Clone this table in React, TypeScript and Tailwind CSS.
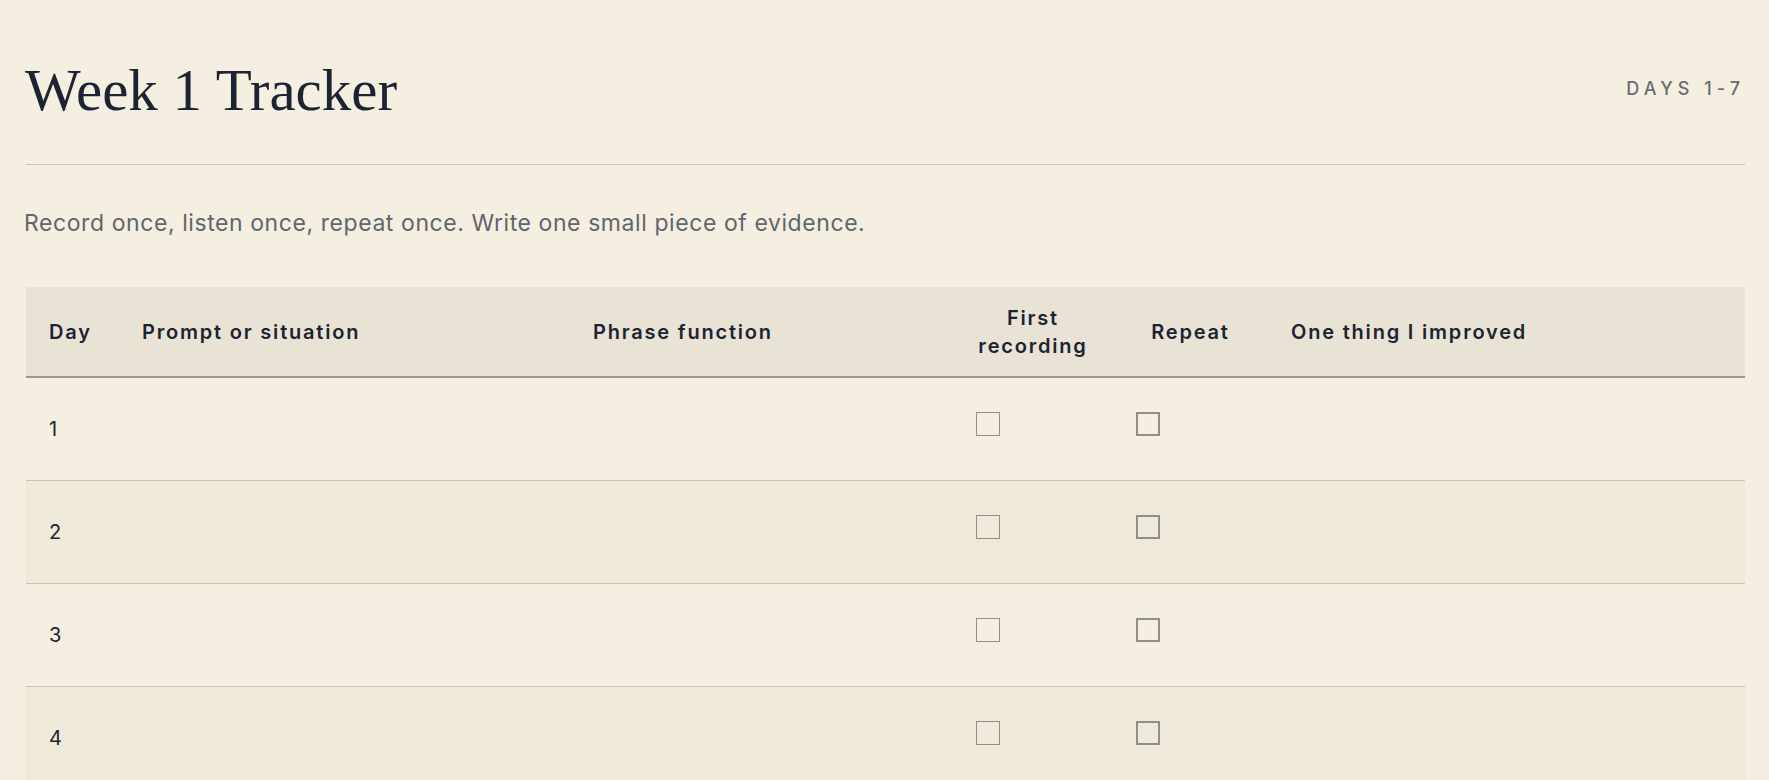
import React from "react";

const days = [1, 2, 3, 4, 5, 6, 7];

const cols = "grid grid-cols-[93px_451px_383px_160px_155px_1fr]";

const Box = ({ thick }: { thick?: boolean }) => (
  <span
    className={`block w-6 h-6 mb-[10px] ${thick ? "border-2" : "border"} border-[#8f8e8a]`}
  />
);

export default function App() {
  return (
    <div className="min-h-screen bg-[#f4efe1] pl-[26px] pr-[24px] pt-[61px] font-['Inter',sans-serif] text-[#1c2333]">
      <div className="flex items-center justify-between border-b border-[#c9c5bb] pb-[44px]">
        <h1 className="font-['Liberation_Serif',serif] text-[59px] leading-none font-normal -ml-[1px]">
          Week 1 Tracker
        </h1>
        <div className="mb-[5px] text-[18px] font-medium tracking-[0.28em] text-[#6a6c71]">
          DAYS 1-7
        </div>
      </div>

      <p className="mt-[42px] text-[23px] leading-[33px] tracking-[0.025em] text-[#61656c] -ml-[2px]">
        Record once, listen once, repeat once. Write one small piece of evidence.
      </p>

      <div className="mt-[47px]">
        <div
          className={`${cols} h-[91px] items-center bg-[#e9e3d5] border-b-2 border-[#9a9893] text-[20px] font-semibold tracking-[0.09em] leading-[28px]`}
        >
          <div className="px-[23px]">Day</div>
          <div className="px-[23px]">Prompt or situation</div>
          <div className="px-[23px]">Phrase function</div>
          <div className="px-[20px] text-center">First recording</div>
          <div className="px-[23px] text-center">Repeat</div>
          <div className="px-[23px]">One thing I improved</div>
        </div>

        {days.map((d) => (
          <div
            key={d}
            className={`${cols} h-[103px] items-center border-b border-[#c4c1b7] text-[20px] ${
              d % 2 === 0 ? "bg-[#efe9da]" : "bg-[#f4efe1]"
            }`}
          >
            <div className="px-[23px]">{d}</div>
            <div className="px-[23px]" />
            <div className="px-[23px]" />
            <div className="px-[23px] flex items-center">
              <Box />
            </div>
            <div className="px-[23px] flex items-center">
              <Box thick />
            </div>
            <div className="px-[23px]" />
          </div>
        ))}
      </div>
    </div>
  );
}
